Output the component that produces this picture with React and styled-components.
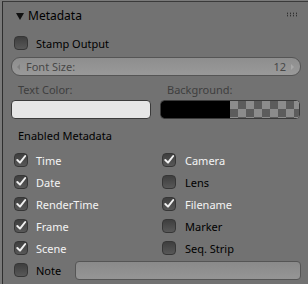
import React from 'react';
import styled, {createGlobalStyle} from 'styled-components';

const GlobalStyle = createGlobalStyle`
  html, body {
    margin: 0;
    padding: 0;
    background: #7a7a7a;
  }
  body {
    font-family: "Noto Sans", "Open Sans", sans-serif;
    font-size: 11px;
  }
`;

const Region = styled.div`
  width: 306px;
  height: 283px;
  margin-left: 2px;
  margin-top: 1px;
  box-sizing: border-box;
  background: #727272;
  border-left: 1px solid #2e2e2e;
  border-top: 1px solid #3a3a3a;
  overflow: hidden;
`;

const Header = styled.div`
  display: flex;
  align-items: center;
  height: 27px;
  padding: 0 10px 0 13px;
  font-size: 12px;
  color: #000;
`;

const Triangle = styled.span`
  width: 0;
  height: 0;
  border-left: 4px solid transparent;
  border-right: 4px solid transparent;
  border-top: 7px solid #111;
  margin-right: 4px;
  margin-top: 1px;
`;

const Title = styled.span`
  flex: 1;
`;

const Grip = styled.span`
  width: 11px;
  height: 5px;
  margin-right: 1px;
  margin-top: -2px;
  background-image: radial-gradient(circle, #1e1e1e 0.6px, transparent 0.9px);
  background-size: 3px 2.5px;
`;

const Body = styled.div`
  display: flex;
  flex-direction: column;
  padding: 0 7px;
`;

const StampRow = styled.div`
  display: flex;
  align-items: center;
  margin-top: 3px;
  padding-left: 4px;
`;

const Box = styled.span`
  width: 14px;
  height: 14px;
  box-sizing: border-box;
  border-radius: 4px;
  border: 1px solid #363636;
  background: linear-gradient(#3e3e3e, #585858);
  display: inline-flex;
  align-items: center;
  justify-content: center;
  flex-shrink: 0;
`;

const Label = styled.span`
  margin-left: ${p => p.gap}px;
  color: ${p => (p.on ? '#f4f4f4' : '#000')};
  white-space: nowrap;
`;

const CheckWrap = styled.div`
  display: flex;
  align-items: center;
  height: 22px;
`;

const Check = ({on, gap = 8, children}) => (
  <CheckWrap>
    <Box>
      {on && (
        <svg width="12" height="12" viewBox="0 0 12 12">
          <path d="M2.3 6 L5 8.6 L10.2 2" fill="none" stroke="#f0f0f0" strokeWidth="2"
                strokeLinecap="round" strokeLinejoin="round"/>
        </svg>
      )}
    </Box>
    <Label on={on} gap={gap}>{children}</Label>
  </CheckWrap>
);

const Slider = styled.div`
  display: flex;
  align-items: center;
  height: 19px;
  margin: 3px 0 0 1px;
  padding: 0 6px 0 5px;
  border: 1px solid #555;
  border-radius: 9px;
  background: linear-gradient(#8e8e8e, #999);
  color: #474747;
  box-sizing: border-box;
`;

const Arrow = styled.span`
  width: 0;
  height: 0;
  border-top: 3px solid transparent;
  border-bottom: 3px solid transparent;
  ${p => (p.right ? 'border-left: 3px solid #a8a8a8;' : 'border-right: 3px solid #7f7f7f;')}
`;

const SliderText = styled.span`
  flex: 1;
  margin: 0 ${p => (p.right ? 5 : 0)}px 0 ${p => (p.right ? 0 : 6)}px;
  text-align: ${p => (p.right ? 'right' : 'left')};
`;

const ColorGrid = styled.div`
  display: grid;
  grid-template-columns: 140px 140px;
  column-gap: 9px;
  margin-left: 1px;
  margin-top: 7px;
`;

const ColorLabel = styled.div`
  color: #3e3e3e;
  height: 14px;
  line-height: 14px;
  padding-left: 7px;
  margin-bottom: 3px;
`;

const Swatch = styled.div`
  height: 19px;
  box-sizing: border-box;
  border: 1px solid #3a3a3a;
  border-radius: 4px;
  overflow: hidden;
  display: flex;
  background: #e6e6e6;
`;

const Half = styled.span`
  flex: 1;
  background: #000;
`;

const Checker = styled.span`
  flex: 1;
  background-color: #8c8c8c;
  background-image:
    linear-gradient(45deg, #5c5c5c 25%, transparent 25%, transparent 75%, #5c5c5c 75%),
    linear-gradient(45deg, #5c5c5c 25%, transparent 25%, transparent 75%, #5c5c5c 75%);
  background-size: 16px 16px;
  background-position: 0 0, 8px 8px;
`;

const Section = styled.div`
  color: #000;
  height: 22px;
  display: flex;
  align-items: center;
  padding-left: 8px;
  margin-top: 5px;
  margin-bottom: 3px;
`;

const Items = styled.div`
  display: grid;
  grid-template-columns: 148px 148px;
  padding-left: 4px;
`;

const NoteRow = styled.div`
  display: flex;
  align-items: center;
  height: 22px;
  padding-left: 4px;
`;

const Field = styled.div`
  flex: 1;
  height: 19px;
  margin-left: 14px;
  box-sizing: border-box;
  border: 1px solid #555;
  border-radius: 4px;
  background: linear-gradient(#8a8a8a, #959595);
`;

const items = [
  ['Time', true, 'Camera', true],
  ['Date', true, 'Lens', false],
  ['RenderTime', true, 'Filename', true],
  ['Frame', true, 'Marker', false],
  ['Scene', true, 'Seq. Strip', false],
];

export default function App() {
  return (
    <>
      <GlobalStyle/>
      <Region>
        <Header>
          <Triangle/>
          <Title>Metadata</Title>
          <Grip/>
        </Header>
        <Body>
          <StampRow>
            <Check on={false}>Stamp Output</Check>
          </StampRow>
          <Slider>
            <Arrow/>
            <SliderText>Font Size:</SliderText>
            <SliderText right>12</SliderText>
            <Arrow right/>
          </Slider>
          <ColorGrid>
            <div>
              <ColorLabel>Text Color:</ColorLabel>
              <Swatch/>
            </div>
            <div>
              <ColorLabel>Background:</ColorLabel>
              <Swatch><Half/><Checker/></Swatch>
            </div>
          </ColorGrid>
          <Section>Enabled Metadata</Section>
          <Items>
            {items.map(([a, aOn, b, bOn]) => (
              <React.Fragment key={a}>
                <Check on={aOn}>{a}</Check>
                <Check on={bOn} gap={9}>{b}</Check>
              </React.Fragment>
            ))}
          </Items>
          <NoteRow>
            <Check on={false}>Note</Check>
            <Field/>
          </NoteRow>
        </Body>
      </Region>
    </>
  );
}
